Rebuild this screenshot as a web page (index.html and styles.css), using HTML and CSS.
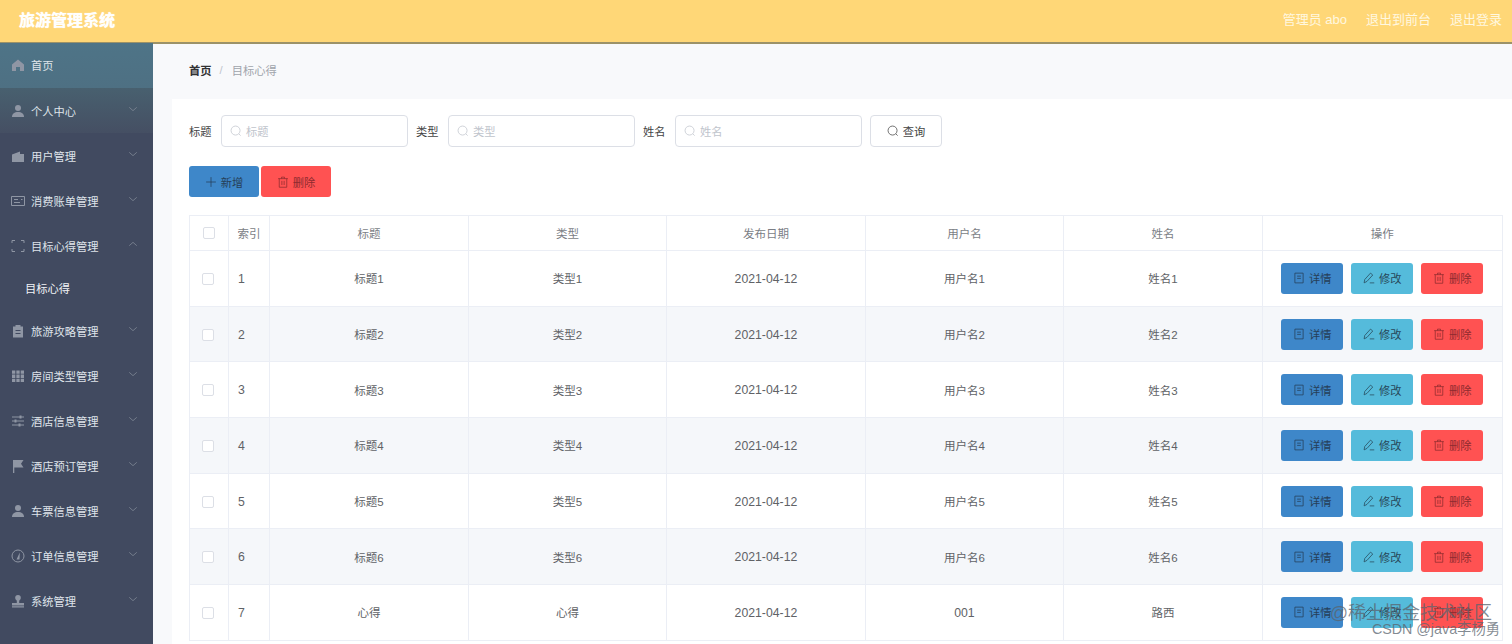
FILE: index.html
```html
<!DOCTYPE html>
<html lang="zh-CN">
<head>
  <meta charset="UTF-8">
  <title>旅游管理系统</title>
  <link rel="stylesheet" href="styles.css">
</head>
<body>
  <svg class="icon-defs" width="0" height="0">
    <symbol id="i-search" viewBox="0 0 16 16"><circle cx="7.400" cy="7.400" r="6" fill="none" stroke="currentColor"/><path d="M11.800 11.800l2.400 2.400" fill="none" stroke="currentColor"/></symbol>
    <symbol id="i-plus" viewBox="0 0 16 16"><path d="M8 1.500v13M1.500 8h13" fill="none" stroke="currentColor"/></symbol>
    <symbol id="i-trash" viewBox="0 0 16 16"><path d="M1.500 3.500h13M6 3.500V1.500h4v2M3 3.500V15h10V3.500M6.500 6.500v5.500M9.500 6.500v5.500" fill="none" stroke="currentColor"/></symbol>
    <symbol id="i-doc" viewBox="0 0 16 16"><path d="M2.500 1.500h11v13h-11zM5.500 5.500h5M5.500 8.500h5" fill="none" stroke="currentColor"/></symbol>
    <symbol id="i-edit" viewBox="0 0 16 16"><path d="M1.500 14.500l.8-4.500 7.700-8.500 3 2.500-7.700 8.500zM9 14.500h6" fill="none" stroke="currentColor"/></symbol>
    <symbol id="i-down" viewBox="0 0 12 12"><path d="M1.500 4l4.500 4 4.500-4" fill="none" stroke="currentColor"/></symbol>
    <symbol id="i-up" viewBox="0 0 12 12"><path d="M1.500 8l4.500-4 4.500 4" fill="none" stroke="currentColor"/></symbol>
    <symbol id="i-home" viewBox="0 0 14 14"><path d="M7 1.500L1 6.500V13h4V9h4v4h4V6.500z" fill="currentColor"/></symbol>
    <symbol id="i-user" viewBox="0 0 14 14"><circle cx="7" cy="4" r="3" fill="currentColor"/><path d="M1 13c0-3.500 2.500-5 6-5s6 1.500 6 5z" fill="currentColor"/></symbol>
    <symbol id="i-wallet" viewBox="0 0 14 14"><path d="M1 5.500l8-3v2.500h4V13H1z" fill="currentColor"/></symbol>
    <symbol id="i-card" viewBox="0 0 14 14"><path d="M.5 2.500h13v9H.5z" fill="none" stroke="currentColor"/><path d="M3 5.500h4M3 8.500h6M10 5.500h1.500" fill="none" stroke="currentColor"/></symbol>
    <symbol id="i-frame" viewBox="0 0 14 14"><path d="M1 4V1.500h3M10 1.500h3V4M13 10v2.500h-3M4 12.500H1V10" fill="none" stroke="currentColor"/></symbol>
    <symbol id="i-clip" viewBox="0 0 14 14"><path d="M2 2.500h2.500V1h5v1.500H12V13.500H2z" fill="currentColor"/><path d="M4.500 6.500h5M4.500 9.500h5" stroke="#414a60"/></symbol>
    <symbol id="i-grid" viewBox="0 0 14 14"><path d="M1 1.500h3.300v3.300H1zM5.350 1.500h3.300v3.300h-3.300zM9.700 1.500H13v3.300H9.700zM1 5.600h3.300v3.300H1zM5.350 5.600h3.300v3.300h-3.300zM9.700 5.600H13v3.300H9.700zM1 9.700h3.300V13H1zM5.350 9.700h3.300V13h-3.300zM9.700 9.700H13V13H9.700z" fill="currentColor"/></symbol>
    <symbol id="i-sliders" viewBox="0 0 14 14"><path d="M1 3h12M1 7h12M1 11h12" fill="none" stroke="currentColor"/><path d="M8.500 1.500h2v3h-2zM3.500 5.500h2v3h-2zM7.500 9.500h2v3h-2z" fill="currentColor"/></symbol>
    <symbol id="i-flag" viewBox="0 0 14 14"><path d="M2 1h10.500L10 4.800l2.500 3.700H3.300V14H2z" fill="currentColor"/></symbol>
    <symbol id="i-gauge" viewBox="0 0 14 14"><circle cx="7" cy="7" r="6" fill="none" stroke="currentColor"/><path d="M5.500 10.500L8.800 3.500 8.500 10.500z" fill="currentColor"/></symbol>
    <symbol id="i-stamp" viewBox="0 0 14 14"><circle cx="7" cy="3.800" r="2.800" fill="currentColor"/><path d="M5.800 6h2.400v3H13v2.500H1V9h4.800zM1 12.300h12V13.500H1z" fill="currentColor"/></symbol>
  </svg>

  <header class="topbar">
    <div class="brand">旅游管理系统</div>
    <nav class="topnav">
      <span>管理员 abo</span>
      <span>退出到前台</span>
      <span>退出登录</span>
    </nav>
  </header>

  <div class="layout">
    <aside class="sidebar">
      <div class="menu-item"><svg class="menu-icon"><use href="#i-home"/></svg><span class="menu-label">首页</span></div>
      <div class="menu-item"><svg class="menu-icon"><use href="#i-user"/></svg><span class="menu-label">个人中心</span><svg class="menu-arrow"><use href="#i-down"/></svg></div>
      <div class="menu-item"><svg class="menu-icon"><use href="#i-wallet"/></svg><span class="menu-label">用户管理</span><svg class="menu-arrow"><use href="#i-down"/></svg></div>
      <div class="menu-item"><svg class="menu-icon"><use href="#i-card"/></svg><span class="menu-label">消费账单管理</span><svg class="menu-arrow"><use href="#i-down"/></svg></div>
      <div class="menu-item"><svg class="menu-icon"><use href="#i-frame"/></svg><span class="menu-label">目标心得管理</span><svg class="menu-arrow"><use href="#i-up"/></svg></div>
      <div class="menu-item menu-sub">目标心得</div>
      <div class="menu-item"><svg class="menu-icon"><use href="#i-clip"/></svg><span class="menu-label">旅游攻略管理</span><svg class="menu-arrow"><use href="#i-down"/></svg></div>
      <div class="menu-item"><svg class="menu-icon"><use href="#i-grid"/></svg><span class="menu-label">房间类型管理</span><svg class="menu-arrow"><use href="#i-down"/></svg></div>
      <div class="menu-item"><svg class="menu-icon"><use href="#i-sliders"/></svg><span class="menu-label">酒店信息管理</span><svg class="menu-arrow"><use href="#i-down"/></svg></div>
      <div class="menu-item"><svg class="menu-icon"><use href="#i-flag"/></svg><span class="menu-label">酒店预订管理</span><svg class="menu-arrow"><use href="#i-down"/></svg></div>
      <div class="menu-item"><svg class="menu-icon"><use href="#i-user"/></svg><span class="menu-label">车票信息管理</span><svg class="menu-arrow"><use href="#i-down"/></svg></div>
      <div class="menu-item"><svg class="menu-icon"><use href="#i-gauge"/></svg><span class="menu-label">订单信息管理</span><svg class="menu-arrow"><use href="#i-down"/></svg></div>
      <div class="menu-item"><svg class="menu-icon"><use href="#i-stamp"/></svg><span class="menu-label">系统管理</span><svg class="menu-arrow"><use href="#i-down"/></svg></div>
    </aside>

    <main class="content">
      <div class="breadcrumb">
        <b>首页</b><i>/</i><span>目标心得</span>
      </div>

      <section class="panel">
        <form class="search-form">
          <label>标题</label>
          <div class="fake-input"><svg class="btn-icon"><use href="#i-search"/></svg>标题</div>
          <label>类型</label>
          <div class="fake-input"><svg class="btn-icon"><use href="#i-search"/></svg>类型</div>
          <label>姓名</label>
          <div class="fake-input"><svg class="btn-icon"><use href="#i-search"/></svg>姓名</div>
          <button type="button" class="btn-query"><svg class="btn-icon"><use href="#i-search"/></svg>查询</button>
        </form>

        <div class="actions">
          <button type="button" class="btn btn-blue btn-big"><svg class="btn-icon"><use href="#i-plus"/></svg>新增</button>
          <button type="button" class="btn btn-red btn-big"><svg class="btn-icon"><use href="#i-trash"/></svg>删除</button>
        </div>

        <table class="data-table">
          <colgroup>
            <col class="c-check"><col class="c-index"><col class="c-wide"><col class="c-wide"><col class="c-wide"><col class="c-wide"><col class="c-wide"><col>
          </colgroup>
          <thead>
            <tr><th><span class="box"></span></th><th>索引</th><th>标题</th><th>类型</th><th>发布日期</th><th>用户名</th><th>姓名</th><th>操作</th></tr>
          </thead>
          <tbody>
            <tr><td><span class="box"></span></td><td class="left num">1</td><td>标题1</td><td>类型1</td><td class="num">2021-04-12</td><td>用户名1</td><td>姓名1</td><td><div class="row-btns"><button type="button" class="btn btn-blue"><svg class="btn-icon"><use href="#i-doc"/></svg>详情</button><button type="button" class="btn btn-cyan"><svg class="btn-icon"><use href="#i-edit"/></svg>修改</button><button type="button" class="btn btn-red"><svg class="btn-icon"><use href="#i-trash"/></svg>删除</button></div></td></tr>
            <tr><td><span class="box"></span></td><td class="left num">2</td><td>标题2</td><td>类型2</td><td class="num">2021-04-12</td><td>用户名2</td><td>姓名2</td><td><div class="row-btns"><button type="button" class="btn btn-blue"><svg class="btn-icon"><use href="#i-doc"/></svg>详情</button><button type="button" class="btn btn-cyan"><svg class="btn-icon"><use href="#i-edit"/></svg>修改</button><button type="button" class="btn btn-red"><svg class="btn-icon"><use href="#i-trash"/></svg>删除</button></div></td></tr>
            <tr><td><span class="box"></span></td><td class="left num">3</td><td>标题3</td><td>类型3</td><td class="num">2021-04-12</td><td>用户名3</td><td>姓名3</td><td><div class="row-btns"><button type="button" class="btn btn-blue"><svg class="btn-icon"><use href="#i-doc"/></svg>详情</button><button type="button" class="btn btn-cyan"><svg class="btn-icon"><use href="#i-edit"/></svg>修改</button><button type="button" class="btn btn-red"><svg class="btn-icon"><use href="#i-trash"/></svg>删除</button></div></td></tr>
            <tr><td><span class="box"></span></td><td class="left num">4</td><td>标题4</td><td>类型4</td><td class="num">2021-04-12</td><td>用户名4</td><td>姓名4</td><td><div class="row-btns"><button type="button" class="btn btn-blue"><svg class="btn-icon"><use href="#i-doc"/></svg>详情</button><button type="button" class="btn btn-cyan"><svg class="btn-icon"><use href="#i-edit"/></svg>修改</button><button type="button" class="btn btn-red"><svg class="btn-icon"><use href="#i-trash"/></svg>删除</button></div></td></tr>
            <tr><td><span class="box"></span></td><td class="left num">5</td><td>标题5</td><td>类型5</td><td class="num">2021-04-12</td><td>用户名5</td><td>姓名5</td><td><div class="row-btns"><button type="button" class="btn btn-blue"><svg class="btn-icon"><use href="#i-doc"/></svg>详情</button><button type="button" class="btn btn-cyan"><svg class="btn-icon"><use href="#i-edit"/></svg>修改</button><button type="button" class="btn btn-red"><svg class="btn-icon"><use href="#i-trash"/></svg>删除</button></div></td></tr>
            <tr><td><span class="box"></span></td><td class="left num">6</td><td>标题6</td><td>类型6</td><td class="num">2021-04-12</td><td>用户名6</td><td>姓名6</td><td><div class="row-btns"><button type="button" class="btn btn-blue"><svg class="btn-icon"><use href="#i-doc"/></svg>详情</button><button type="button" class="btn btn-cyan"><svg class="btn-icon"><use href="#i-edit"/></svg>修改</button><button type="button" class="btn btn-red"><svg class="btn-icon"><use href="#i-trash"/></svg>删除</button></div></td></tr>
            <tr><td><span class="box"></span></td><td class="left num">7</td><td>心得</td><td>心得</td><td class="num">2021-04-12</td><td class="num">001</td><td>路西</td><td><div class="row-btns"><button type="button" class="btn btn-blue"><svg class="btn-icon"><use href="#i-doc"/></svg>详情</button><button type="button" class="btn btn-cyan"><svg class="btn-icon"><use href="#i-edit"/></svg>修改</button><button type="button" class="btn btn-red"><svg class="btn-icon"><use href="#i-trash"/></svg>删除</button></div></td></tr>
          </tbody>
        </table>
      </section>
    </main>
  </div>

  <div class="watermark">
    <div class="wm-top">@稀土掘金技术社区</div>
    <div class="wm-bottom">CSDN @java李杨勇</div>
  </div>
</body>
</html>
```

FILE: styles.css
```css
* {
  box-sizing: border-box;
}

html, body {
  height: 100%;
}

body {
  margin: 0;
  overflow: hidden;
  position: relative;
  font-family: "Liberation Sans", "Noto Sans CJK SC", sans-serif;
  font-size: 11.5px;
  color: #606266;
  background: #f8f9fb;
}

.icon-defs {
  position: absolute;
}

/* top bar */
.topbar {
  height: 44px;
  display: flex;
  align-items: center;
  justify-content: space-between;
  padding: 0 10px 5px 19px;
  background: #ffd777;
  border-bottom: 2px solid #9c9268;
  color: #fff;
}

.brand {
  font-size: 16px;
  font-weight: bold;
  text-shadow: 0 0 1px #fff;
}

.topnav {
  display: flex;
  gap: 19px;
  font-size: 13px;
  color: #fff8e0;
}

/* sidebar */
.layout {
  display: flex;
  height: 600px;
}

.sidebar {
  width: 153px;
  flex: none;
  margin-top: -1px;
  background: #414a60;
  height: 601px;
  overflow: hidden;
}

.menu-item {
  height: 45px;
  display: flex;
  align-items: center;
  padding: 0 15px 0 11px;
  color: #dfe4ea;
  font-size: 11.25px;
}

.menu-item:nth-child(1) {
  padding-bottom: 2px;
  background: linear-gradient(#4e7487, #4e7083);
}

.menu-item:nth-child(2) {
  background: linear-gradient(#48606f, #454f63);
}

.menu-icon {
  width: 14px;
  height: 14px;
  margin-right: 6px;
  color: #8f96a4;
  flex: none;
}

.menu-label {
  flex: 1;
}

.menu-arrow {
  width: 10px;
  height: 10px;
  color: #7d8594;
  margin-top: -4px;
}

.menu-sub {
  height: 40px;
  padding-left: 25px;
  color: #f2f4f7;
}

/* main area */
.content {
  flex: 1;
  min-width: 0;
  padding-left: 19px;
}

.breadcrumb {
  height: 55px;
  display: flex;
  align-items: center;
  padding: 0 0 3px 17px;
  font-size: 11.25px;
  color: #a0a4ab;
}

.breadcrumb b {
  color: #303133;
}

.breadcrumb i {
  font-style: normal;
  margin: 0 9px 0 8px;
  color: #c0c4cc;
}

.panel {
  background: #fff;
  padding: 16px 9px 0 17px;
  height: 545px;
}

.search-form {
  display: flex;
  align-items: center;
  height: 32px;
}

.search-form label {
  width: 32px;
  color: #444;
  font-size: 11.25px;
}

.fake-input {
  width: 187px;
  height: 32px;
  margin-right: 8px;
  display: flex;
  align-items: center;
  gap: 4px;
  padding-left: 8px;
  border: 1px solid #dcdfe6;
  border-radius: 4px;
  color: #c0c4cc;
  font-size: 11.25px;
}

.btn-query {
  width: 72px;
  height: 32px;
  display: flex;
  align-items: center;
  justify-content: center;
  gap: 4px;
  background: #fff;
  border: 1px solid #dcdfe6;
  border-radius: 4px;
  color: #444;
  font: inherit;
  font-size: 11.25px;
}

.btn-icon {
  width: 12px;
  height: 12px;
  flex: none;
}

.actions {
  display: flex;
  gap: 2px;
  margin-top: 19px;
}

.btn {
  width: 62px;
  height: 31px;
  display: flex;
  align-items: center;
  justify-content: center;
  gap: 4px;
  padding: 0;
  border: none;
  border-radius: 3px;
  font: inherit;
  font-size: 11.25px;
  color: #3b4a5a;
}

.btn-big {
  width: 70px;
}

.btn-blue {
  background: #3e87c9;
  color: #263f58;
}

.btn-cyan {
  background: #55bbdb;
  color: #27485a;
}

.btn-red {
  background: #ff5252;
  color: #8e2b2f;
}

/* table */
.data-table {
  width: 100%;
  margin-top: 18px;
  border-collapse: collapse;
  table-layout: fixed;
}

.c-check {
  width: 39px;
}

.c-index {
  width: 41.200px;
}

.c-wide {
  width: 198.500px;
}

.data-table th,
.data-table td {
  border: 1px solid #ebeef5;
  padding: 0;
  text-align: center;
  font-weight: normal;
}

.data-table th {
  height: 35px;
  color: #7b7e85;
}

.data-table td {
  height: 55.700px;
}

.data-table td.num {
  font-size: 12.250px;
  padding-top: 1px;
}

.data-table td.left {
  text-align: left;
  padding-left: 9px;
}

.data-table tbody tr:nth-child(even) {
  background: #f5f7fa;
}

.box {
  display: inline-block;
  width: 12px;
  height: 12px;
  border: 1px solid #dcdfe6;
  border-radius: 2px;
  background: #fff;
  vertical-align: middle;
}

.data-table td .box {
  margin-right: 2px;
}

.row-btns {
  display: flex;
  justify-content: center;
  gap: 8px;
}

/* image watermark sits above the table */
.watermark {
  position: absolute;
  right: 12px;
  bottom: 7px;
  text-align: right;
  color: rgba(90, 100, 110, 0.75);
  pointer-events: none;
}

.wm-top {
  font-size: 18px;
  line-height: 18px;
  margin-right: 8px;
}

.wm-bottom {
  font-size: 14.300px;
  line-height: 15px;
}
```
